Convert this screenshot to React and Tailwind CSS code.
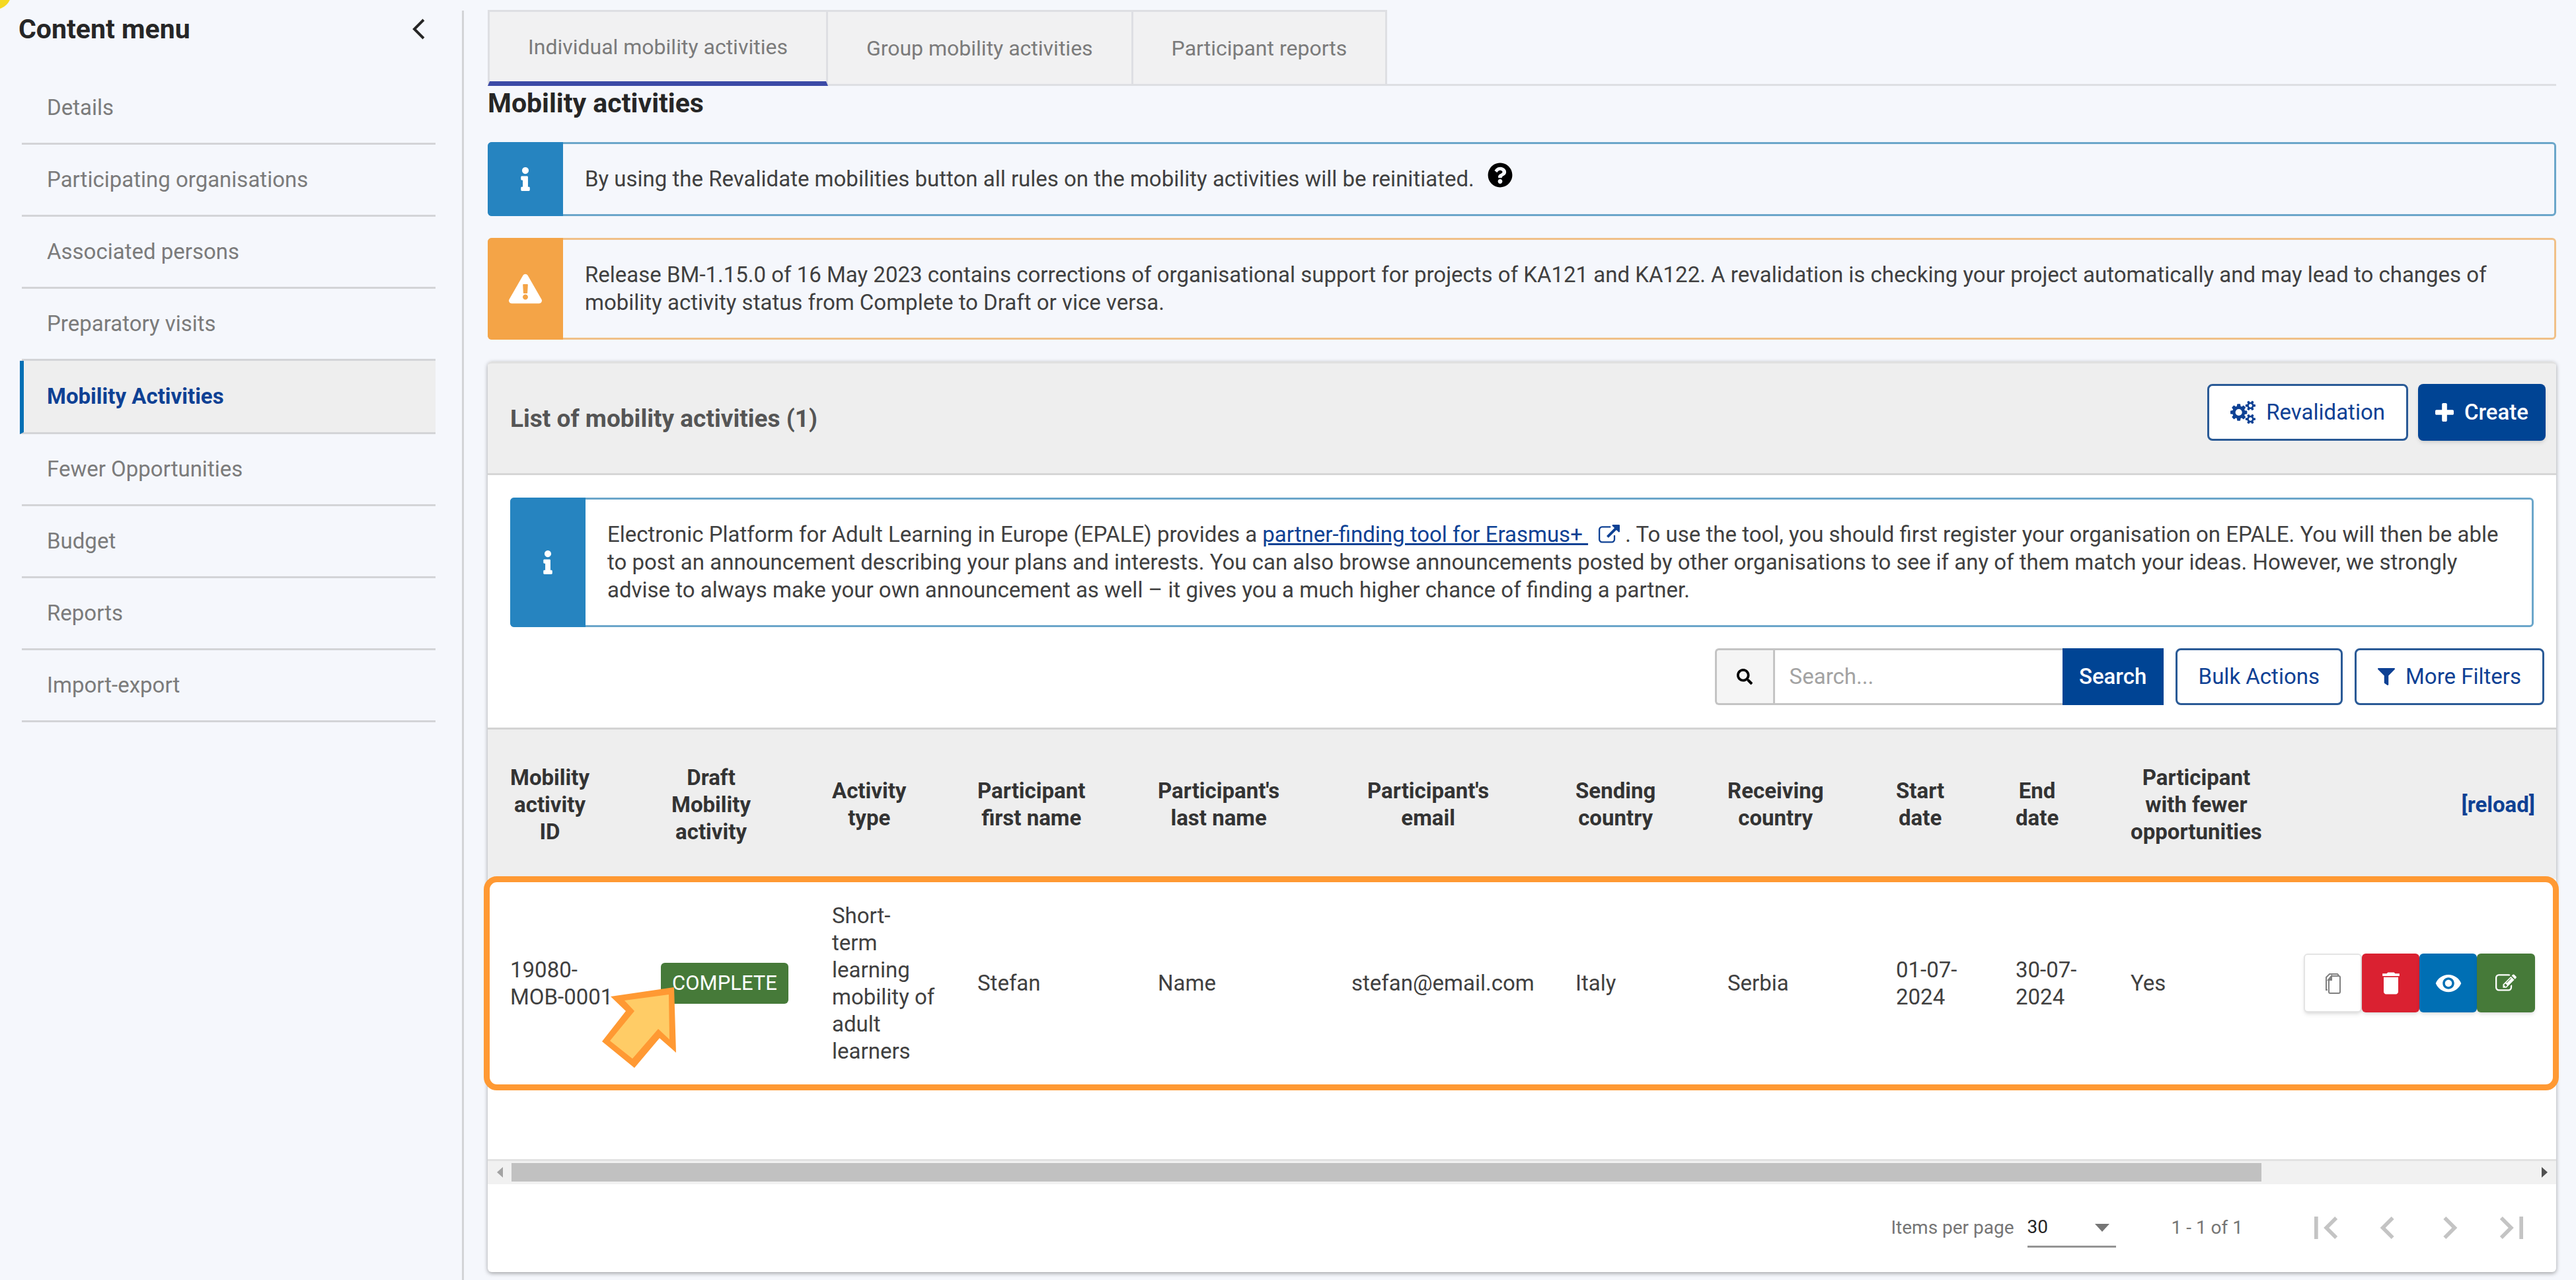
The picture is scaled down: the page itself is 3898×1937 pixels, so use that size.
import React from 'react';
import {
    FaInfo,
    FaExclamationTriangle,
    FaQuestionCircle,
    FaSearch,
    FaFilter
} from 'react-icons/fa';
import { MdDelete, MdVisibility } from 'react-icons/md';

const MENU_ITEMS = [
    'Details',
    'Participating organisations',
    'Associated persons',
    'Preparatory visits',
    'Mobility Activities',
    'Fewer Opportunities',
    'Budget',
    'Reports',
    'Import-export'
];

const TABS = ['Individual mobility activities', 'Group mobility activities', 'Participant reports'];

const COLUMNS = [
    { lines: ['Mobility', 'activity', 'ID'], width: 'w-[262px]', pad: 'pl-[34px]' },
    { lines: ['Draft', 'Mobility', 'activity'], width: 'w-[259px]', pad: 'pl-4' },
    { lines: ['Activity', 'type'], width: 'w-[220px]', pad: '' },
    { lines: ['Participant', 'first name'], width: 'w-[273px]', pad: '' },
    { lines: ["Participant's", 'last name'], width: 'w-[293px]', pad: '' },
    { lines: ["Participant's", 'email'], width: 'w-[339px]', pad: 'pl-6' },
    { lines: ['Sending', 'country'], width: 'w-[230px]', pad: '' },
    { lines: ['Receiving', 'country'], width: 'w-[255px]', pad: '' },
    { lines: ['Start', 'date'], width: 'w-[181px]', pad: '' },
    { lines: ['End', 'date'], width: 'w-[174px]', pad: '' },
    { lines: ['Participant', 'with fewer', 'opportunities'], width: 'w-[262px]', pad: '' }
];

const ExternalLinkIcon = ({ className }) => (
    <svg viewBox="0 0 1792 1792" fill="currentColor" className={className} aria-hidden="true">
        <path d="M1408 928v320q0 119-84.5 203.5t-203.5 84.5h-832q-119 0-203.5-84.5t-84.5-203.5v-832q0-119 84.5-203.5t203.5-84.5h704q14 0 23 9t9 23v64q0 14-9 23t-23 9h-704q-66 0-113 47t-47 113v832q0 66 47 113t113 47h832q66 0 113-47t47-113v-320q0-14 9-23t23-9h64q14 0 23 9t9 23zm384-864v512q0 26-19 45t-45 19-45-19l-176-176-652 652q-10 10-23 10t-23-10l-114-114q-10-10-10-23t10-23l652-652-176-176q-19-19-19-45t19-45 45-19h512q26 0 45 19t19 45z" />
    </svg>
);

const EditIcon = ({ className }) => (
    <svg viewBox="0 0 1792 1792" fill="currentColor" className={className} aria-hidden="true">
        <path d="M888 1184l116-116-152-152-116 116v56h96v96h56zm440-720q-16-16-33 1l-350 350q-17 17-1 33t33-1l350-350q17-17 1-33zm80 594v190q0 119-84.5 203.5t-203.5 84.5h-832q-119 0-203.5-84.5t-84.5-203.5v-832q0-119 84.5-203.5t203.5-84.5h832q63 0 117 25 15 7 18 23 3 17-9 29l-49 49q-14 14-32 8-23-6-45-6h-832q-66 0-113 47t-47 113v832q0 66 47 113t113 47h832q66 0 113-47t47-113v-126q0-13 9-22l64-64q15-15 35-7t20 29zm-96-738l288 288-672 672h-288v-288zm444 132l-92 92-288-288 92-92q28-28 68-28t68 28l152 152q28 28 28 68t-28 68z" />
    </svg>
);

const PlusIcon = ({ className }) => (
    <svg viewBox="192 128 1408 1408" fill="currentColor" className={className} aria-hidden="true">
        <path d="M1600 736v192q0 40-28 68t-68 28h-416v416q0 40-28 68t-68 28h-192q-40 0-68-28t-28-68v-416h-416q-40 0-68-28t-28-68v-192q0-40 28-68t68-28h416v-416q0-40 28-68t68-28h192q40 0 68 28t28 68v416h416q40 0 68 28t28 68z" />
    </svg>
);

const CogsIcon = ({ className }) => (
    <svg viewBox="0 0 1920 1792" fill="currentColor" className={className} aria-hidden="true">
        <path d="M896 896q0-106-75-181t-181-75-181 75-75 181 75 181 181 75 181-75 75-181zm768 512q0-52-38-90t-90-38-90 38-38 90q0 53 37.5 90.5t90.5 37.5 90.5-37.5 37.5-90.5zm0-1024q0-52-38-90t-90-38-90 38-38 90q0 53 37.5 90.5t90.5 37.5 90.5-37.5 37.5-90.5zm-384 421v185q0 10-7 19.5t-16 10.5l-155 24q-11 35-32 76 34 48 90 115 7 11 7 20 0 12-7 19-23 30-82.5 89.5t-78.5 59.5q-11 0-21-7l-115-90q-37 19-77 31-11 108-23 155-7 24-30 24h-186q-11 0-20-7.5t-10-17.5l-23-153q-34-10-75-31l-118 89q-7 7-20 7-11 0-21-8-144-133-144-160 0-9 7-19 10-14 41-53t47-61q-23-44-35-82l-152-24q-10-1-17-9.5t-7-19.5v-185q0-10 7-19.5t16-10.5l155-24q11-35 32-76-34-48-90-115-7-11-7-20 0-12 7-20 22-30 82-89t79-59q11 0 21 7l115 90q34-18 77-32 11-108 23-154 7-24 30-24h186q11 0 20 7.5t10 17.5l23 153q34 10 75 31l118-89q8-7 20-7 11 0 21 8 144 133 144 160 0 8-7 19-12 16-42 54t-45 60q23 48 34 82l152 23q10 2 17 10.5t7 19.5zm640 533v140q0 16-149 31-12 27-30 52 51 113 51 138 0 4-4 7-122 71-124 71-8 0-46-47t-52-68q-20 2-30 2t-30-2q-14 21-52 68t-46 47q-2 0-124-71-4-3-4-7 0-25 51-138-18-25-30-52-149-15-149-31v-140q0-16 149-31 13-29 30-52-51-113-51-138 0-4 4-7 4-2 35-20t59-34 30-16q8 0 46 46.5t52 67.5q20-2 30-2t30 2q51-71 92-112l6-2q4 0 124 70 4 3 4 7 0 25-51 138 17 23 30 52 149 15 149 31zm0-1024v140q0 16-149 31-12 27-30 52 51 113 51 138 0 4-4 7-122 71-124 71-8 0-46-47t-52-68q-20 2-30 2t-30-2q-14 21-52 68t-46 47q-2 0-124-71-4-3-4-7 0-25 51-138-18-25-30-52-149-15-149-31v-140q0-16 149-31 13-29 30-52-51-113-51-138 0-4 4-7 4-2 35-20t59-34 30-16q8 0 46 46.5t52 67.5q20-2 30-2t30 2q51-71 92-112l6-2q4 0 124 70 4 3 4 7 0 25-51 138 17 23 30 52 149 15 149 31z" />
    </svg>
);

const CopyIcon = ({ className }) => (
    <svg viewBox="0 0 24 32" fill="none" stroke="currentColor" strokeWidth="2" className={className} aria-hidden="true">
        <path d="M10 5h11a2 2 0 0 1 2 2v22a2 2 0 0 1-2 2H8a2 2 0 0 1-2-2V10z" />
        <path d="M10 5v6H5z" fill="currentColor" />
        <path d="M4 26H2V7l5-5h12l2 2" />
    </svg>
);

const PagerIcon = ({ d }) => (
    <svg viewBox="0 0 24 24" fill="currentColor" className="size-[68px]" aria-hidden="true">
        <path d={d} />
    </svg>
);

const PAGER = [
    { label: 'First page', d: 'M18.41 16.59L13.82 12l4.59-4.59L17 6l-6 6 6 6zM6 6h2v12H6z' },
    { label: 'Previous page', d: 'M15.41 7.41L14 6l-6 6 6 6 1.41-1.41L10.83 12z' },
    { label: 'Next page', d: 'M10 6L8.59 7.41 13.17 12l-4.58 4.59L10 18l6-6z' },
    { label: 'Last page', d: 'M5.59 7.41L10.18 12l-4.59 4.59L7 18l6-6-6-6zM16 6h2v12h-2z' }
];

const Sidebar = () => (
    <aside className="mt-4 w-[702px] shrink-0 border-r-3 border-[#d3d4d7] pl-7 pr-10">
        <div className="flex h-14 items-center justify-between pr-4">
            <h2 className="text-[41px] leading-[48px] font-bold text-[#262626]">Content menu</h2>
            <button aria-label="Collapse menu" className="text-[#262626]">
                <svg viewBox="0 0 20 32" className="h-8 w-5" fill="none" stroke="currentColor" strokeWidth="4">
                    <path d="M18 2L4 16l14 14" />
                </svg>
            </button>
        </div>
        <nav className="mt-[38px]">
            <ul>
                {MENU_ITEMS.map((item) => {
                    const active = item === 'Mobility Activities';
                    return (
                        <li key={item}>
                            <a
                                href="#"
                                className={`flex items-center border-b-3 border-[#d3d4d7] text-[33px] leading-[42px] ${active ? 'ml-0.5 h-[111px] border-l-6 border-l-[#006fb4] bg-[#eeeeee] pl-[35px] font-bold text-[#0e4194]' : 'ml-[5px] h-[109px] pl-[38px] text-[#7b7b7b]'}`}
                            >
                                {item}
                            </a>
                        </li>
                    );
                })}
            </ul>
        </nav>
    </aside>
);

const Alert = ({ tone, children }) => {
    const warning = tone === 'warning';
    return (
        <div className={`flex rounded-md border-3 ${warning ? 'border-[#f0c088]' : 'border-[#6ba6ca]'}`}>
            <div className={`-m-[3px] flex w-[114px] shrink-0 items-center justify-center rounded-l-md text-white ${warning ? 'bg-[#f4a447]' : 'bg-[#2684c0]'}`}>
                {warning ? <FaExclamationTriangle className="size-[50px]" /> : <FaInfo className="size-9" />}
            </div>
            <div className="py-8 pl-9 pr-9 text-[33px] leading-[42px] text-[#404040]">{children}</div>
        </div>
    );
};

// Pointer that marks the status badge
const PointerArrow = () => (
    <svg viewBox="0 0 114 124" className="absolute top-[37px] -left-[89px] h-[124px] w-[114px]" aria-hidden="true">
        <polygon fill="#ff9933" points="109,0 13,14 36,36 0,82 49,122 87,77 112,99" />
        <polygon fill="#ffcc66" points="101,11 34,20 49,36 12,81 46,108 85,63 102,79" />
    </svg>
);

const MobilityTable = () => (
    <table className="w-full table-fixed border-t-3 border-[#d3d3d3] text-left">
        <thead>
            <tr className="h-[227px] bg-[#eeeeee]">
                {COLUMNS.map((col) => (
                    <th key={col.lines.join(' ')} className={`${col.width} ${col.pad} text-[33px] leading-[41px] font-bold text-[#333333]`}>
                        <span className="inline-block text-center align-middle">
                            {col.lines.map((line) => (
                                <span key={line} className="block">{line}</span>
                            ))}
                        </span>
                    </th>
                ))}
                <th className="pr-8 text-right text-[33px] leading-[41px] font-bold">
                    <button className="text-[#0e4194]">[reload]</button>
                </th>
            </tr>
        </thead>
        <tbody>
            <tr className="relative h-[316px] text-[33px] leading-[41px] text-[#404040]">
                <td className="pl-[34px]">
                    19080-<br />MOB-0001
                    <span className="pointer-events-none absolute -top-1 -right-1 -bottom-1 -left-1.5 rounded-[20px] border-9 border-[#ff9933]" />
                </td>
                <td>
                    <span className="relative inline-flex h-[62px] w-[193px] items-center justify-center rounded-md bg-[#467a39] text-[31px] leading-[41px] text-white">
                        COMPLETE
                        <PointerArrow />
                    </span>
                </td>
                <td>Short-<br />term<br />learning<br />mobility of<br />adult<br />learners</td>
                <td>Stefan</td>
                <td>Name</td>
                <td>stefan@email.com</td>
                <td>Italy</td>
                <td>Serbia</td>
                <td>01-07-<br />2024</td>
                <td>30-07-<br />2024</td>
                <td>Yes</td>
                <td className="pr-8">
                    <div className="flex justify-end">
                        <button aria-label="Copy" className="flex h-[89px] w-[88px] items-center justify-center rounded-md border-2 border-[#e4e4e4] bg-white text-[#808080] shadow-md">
                            <CopyIcon className="h-8 w-6" />
                        </button>
                        <button aria-label="Delete" className="flex h-[89px] w-[87px] items-center justify-center rounded-md bg-[#da2131] text-white shadow-md">
                            <MdDelete className="size-11" />
                        </button>
                        <button aria-label="View" className="flex h-[89px] w-[87px] items-center justify-center rounded-md bg-[#006fb4] text-white shadow-md">
                            <MdVisibility className="size-[42px]" />
                        </button>
                        <button aria-label="Edit" className="flex h-[89px] w-[88px] items-center justify-center rounded-md bg-[#467a39] text-white shadow-md">
                            <EditIcon className="size-8" />
                        </button>
                    </div>
                </td>
            </tr>
        </tbody>
    </table>
);

const Paginator = () => (
    <div className="flex h-[133px] items-center justify-end pr-5 text-[28px] leading-9 text-[#757575]">
        <label htmlFor="page-size">Items per page</label>
        <div className="relative ml-5">
            <select id="page-size" className="h-[60px] w-[134px] appearance-none border-b-3 border-[#949494] bg-transparent text-[#262626]">
                <option>30</option>
            </select>
            <svg viewBox="0 0 22 12" className="pointer-events-none absolute top-6 right-2.5 h-3 w-[22px]" fill="#757575" aria-hidden="true">
                <path d="M0 0h22L11 12z" />
            </svg>
        </div>
        <span className="ml-[84px]">1 - 1 of 1</span>
        <div className="ml-[78px] flex text-[#c4c4c4]">
            {PAGER.map((p) => (
                <button key={p.label} aria-label={p.label} className="flex w-[94px] justify-center">
                    <PagerIcon d={p.d} />
                </button>
            ))}
        </div>
    </div>
);

const App = () => {
    return (
        <div className="relative flex min-h-screen overflow-hidden bg-[#f5f7fc] font-['Roboto',sans-serif]">
            <span className="absolute -top-[34px] -left-[31px] size-12 rounded-full bg-[#f5d922]" />
            <Sidebar />
            <main className="min-w-0 flex-1 pt-[15px] pr-[30px] pb-[11px] pl-9">
                <div role="tablist" className="flex border-b-3 border-[#dedfe3]">
                    {TABS.map((tab, i) => (
                        <button
                            key={tab}
                            role="tab"
                            aria-selected={i === 0}
                            className={`-mb-[3px] flex h-[115px] items-center border-t-3 border-r-3 border-[#dedfe3] bg-[#f1f1f2] px-[58px] text-[32px] leading-[42px] text-[#7b7b7b] ${i === 0 ? 'border-b-7 border-l-3 border-b-[#3b4aa6]' : 'border-b-3'}`}
                        >
                            {tab}
                        </button>
                    ))}
                </div>
                <h1 className="mt-0.5 text-[41px] leading-[48px] font-bold text-[#262626]">Mobility activities</h1>

                <div className="mt-[35px] flex flex-col gap-[33px]">
                    <Alert tone="info">
                        By using the Revalidate mobilities button all rules on the mobility activities will be reinitiated.
                        <FaQuestionCircle className="-mt-2 mb-2 ml-5 inline size-[38px] text-black" />
                    </Alert>
                    <Alert tone="warning">
                        Release BM-1.15.0 of 16 May 2023 contains corrections of organisational support for projects of KA121 and KA122. A revalidation is checking your project automatically and may lead to changes of mobility activity status from Complete to Draft or vice versa.
                    </Alert>
                </div>

                <section className="mt-[33px] rounded-md bg-white shadow-[0_2px_6px_rgba(0,0,0,0.35)]">
                    <header className="flex h-[172px] items-start justify-between rounded-t-md border-t-3 border-b-3 border-t-[#e0e0e0] border-b-[#d6d6d6] bg-[#eeeeee] pt-[31px] pr-4 pl-[34px]">
                        <h2 className="mt-8 text-[37px] leading-[42px] font-bold text-[#555555]">List of mobility activities (1)</h2>
                        <div className="flex gap-[15px] text-[33px] leading-[42px]">
                            <button className="flex h-[86px] items-center gap-4 rounded-lg border-3 border-[#2a5a96] bg-white px-8 text-[#0e4194]">
                                <CogsIcon className="h-9 w-[38px]" />
                                Revalidation
                            </button>
                            <button className="flex h-[86px] items-center gap-4 rounded-lg bg-[#004494] px-[26px] font-medium text-white shadow-md">
                                <PlusIcon className="size-7" />
                                Create
                            </button>
                        </div>
                    </header>

                    <div className="px-[34px] pt-[34px]">
                        <Alert tone="info">
                            Electronic Platform for Adult Learning in Europe (EPALE) provides a{' '}
                            <a href="#" className="text-[#0e4194] underline">partner-finding tool for Erasmus+&nbsp;</a>
                            <ExternalLinkIcon className="mb-1 ml-4 inline size-8 text-[#0e4194]" />
                            {' '}. To use the tool, you should first register your organisation on EPALE. You will then be able to post an announcement describing your plans and interests. You can also browse announcements posted by other organisations to see if any of them match your ideas. However, we strongly advise to always make your own announcement as well – it gives you a much higher chance of finding a partner.
                        </Alert>
                    </div>

                    <div className="flex justify-end gap-[18px] pt-8 pr-[18px] pb-[34px] text-[33px] leading-[42px]">
                        <form className="flex h-[86px]" onSubmit={(e) => e.preventDefault()}>
                            <label htmlFor="search" className="flex w-[88px] items-center justify-center rounded-l-md border-3 border-r-0 border-[#c4c4c4] bg-[#f5f5f5] text-black">
                                <FaSearch className="size-6" />
                            </label>
                            <input
                                id="search"
                                type="text"
                                placeholder="Search..."
                                className="w-[438px] border-3 border-r-0 border-[#c4c4c4] bg-white px-[22px] placeholder-[#a3a3a3]"
                            />
                            <button className="w-[153px] bg-[#004494] font-medium text-white">Search</button>
                        </form>
                        <button className="rounded-lg border-3 border-[#2a5a96] px-8 text-[#0e4194]">Bulk Actions</button>
                        <button className="flex items-center gap-4 rounded-lg border-3 border-[#2a5a96] px-8 text-[#0e4194]">
                            <FaFilter className="size-[26px]" />
                            More Filters
                        </button>
                    </div>

                    <MobilityTable />

                    {/* horizontal scrollbar */}
                    <div className="mt-[108px] flex h-[38px] items-center border-t-3 border-[#e2e2e2] bg-[#f1f1f1]">
                        <span className="flex w-9 justify-center">
                            <svg viewBox="0 0 9 16" className="h-4 w-[9px]" fill="#a3a3a3"><path d="M9 0v16L0 8z" /></svg>
                        </span>
                        <span className="flex-1">
                            <span className="block h-7 w-[86.6%] bg-[#c1c1c1]" />
                        </span>
                        <span className="flex w-9 justify-center">
                            <svg viewBox="0 0 9 16" className="h-4 w-[9px]" fill="#505050"><path d="M0 0v16l9-8z" /></svg>
                        </span>
                    </div>

                    <Paginator />
                </section>
            </main>
        </div>
    );
};

export default App;
